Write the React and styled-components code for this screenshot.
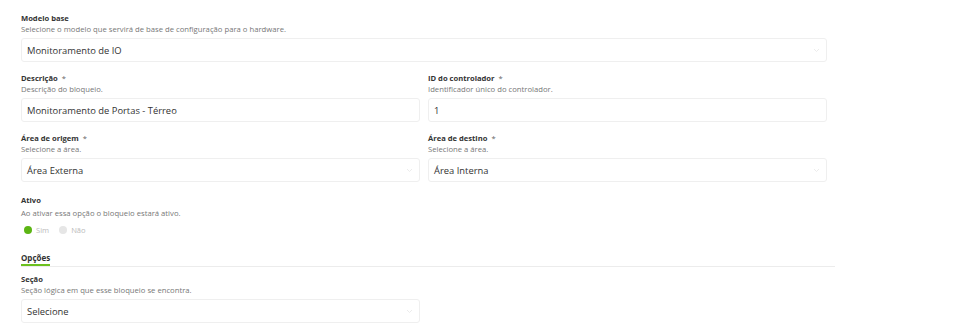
import React from "react";
import styled, { createGlobalStyle } from "styled-components";

const GlobalStyle = createGlobalStyle`
    body {
        margin: 0;
        background: #fff;
        font-family: "Open Sans", "Liberation Sans", sans-serif;
        color: #333;
    }
`;

const Page = styled.div`
    width: 959px;
    height: 334px;
    overflow: hidden;
    padding: 13px 0 0 21px;
    box-sizing: border-box;
`;

const Form = styled.div`
    width: 806px;
`;

const Row = styled.div`
    display: grid;
    grid-template-columns: ${(props) => (props.cols === 2 ? "1fr 1fr" : props.half ? "399px" : "1fr")};
    column-gap: 8px;
`;

const Field = styled.div`
    display: flex;
    flex-direction: column;
    margin-bottom: ${(props) => props.mb ?? 11}px;
`;

const Label = styled.div`
    font-size: 7.6px;
    line-height: 11px;
    font-weight: 700;
    color: #333;
`;

const Required = styled.span`
    margin-left: 4px;
    color: #666;
    font-weight: 400;
`;

const Help = styled.div`
    font-size: 7.7px;
    line-height: 11px;
    color: #777;
    margin-top: ${(props) => props.mt ?? 0}px;
`;

const Input = styled.div`
    margin-top: 3px;
    height: 24px;
    box-sizing: border-box;
    border: 1px solid #efefef;
    border-radius: 3px;
    background: #fff;
    display: flex;
    align-items: center;
    justify-content: space-between;
    padding: 0 6px 0 5px;
    font-size: 9.4px;
    color: #333;
`;

const Chevron = () => (
    <svg width="7" height="5" viewBox="0 0 7 5">
        <path d="M1 1l2.5 2.5L6 1" fill="none" stroke="#ececec" strokeWidth="1" />
    </svg>
);

const Radios = styled.div`
    display: flex;
    align-items: center;
    gap: 10px;
    margin-top: 5px;
    height: 12px;
`;

const Radio = styled.div`
    display: flex;
    align-items: center;
    gap: 4px;
    font-size: 7.6px;
    color: #bbb;
    margin-left: ${(props) => (props.first ? "3px" : "0")};
`;

const Dot = styled.span`
    width: 8px;
    height: 8px;
    border-radius: 50%;
    background: ${(props) => (props.on ? "#5cb514" : "#e6e6e6")};
`;

const Section = styled.div`
    width: 814px;
    border-bottom: 1px solid #ececec;
    margin-bottom: 7px;
`;

const SectionTitle = styled.div`
    display: inline-block;
    font-size: 8px;
    line-height: 12px;
    font-weight: 700;
    color: #333;
    border-bottom: 2px solid #6cc11f;
    margin-bottom: -1px;
`;

const SelectField = ({ value }) => (
    <Input>
        <span>{value}</span>
        <Chevron />
    </Input>
);

const App = () => (
    <Page>
        <GlobalStyle />
        <Form>
            <Field>
                <Label>Modelo base</Label>
                <Help>Selecione o modelo que servirá de base de configuração para o hardware.</Help>
                <SelectField value="Monitoramento de IO" />
            </Field>
            <Row cols={2}>
                <Field>
                    <Label>Descrição<Required>*</Required></Label>
                    <Help>Descrição do bloqueio.</Help>
                    <Input>Monitoramento de Portas - Térreo</Input>
                </Field>
                <Field>
                    <Label>ID do controlador<Required>*</Required></Label>
                    <Help>Identificador único do controlador.</Help>
                    <Input>1</Input>
                </Field>
            </Row>
            <Row cols={2}>
                <Field mb={13}>
                    <Label>Área de origem<Required>*</Required></Label>
                    <Help>Selecione a área.</Help>
                    <SelectField value="Área Externa" />
                </Field>
                <Field mb={13}>
                    <Label>Área de destino<Required>*</Required></Label>
                    <Help>Selecione a área.</Help>
                    <SelectField value="Área Interna" />
                </Field>
            </Row>
            <Field mb={8}>
                <Label>Ativo</Label>
                <Help mt={2}>Ao ativar essa opção o bloqueio estará ativo.</Help>
                <Radios>
                    <Radio first><Dot on />Sim</Radio>
                    <Radio><Dot />Não</Radio>
                </Radios>
            </Field>
            <Section>
                <SectionTitle>Opções</SectionTitle>
            </Section>
            <Row half>
                <Field>
                    <Label>Seção</Label>
                    <Help>Seção lógica em que esse bloqueio se encontra.</Help>
                    <SelectField value="Selecione" />
                </Field>
            </Row>
        </Form>
    </Page>
);

export default App;
